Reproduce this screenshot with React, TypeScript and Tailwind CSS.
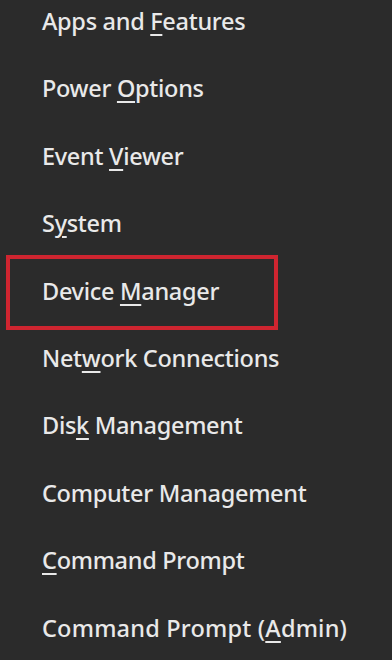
const items: [string, string, string][] = [
  ["Apps and ", "F", "eatures"],
  ["Power ", "O", "ptions"],
  ["Event ", "V", "iewer"],
  ["S", "y", "stem"],
  ["Device ", "M", "anager"],
  ["Net", "w", "ork Connections"],
  ["Dis", "k", " Management"],
  ["Computer Management", "", ""],
  ["", "C", "ommand Prompt"],
  ["Command Prompt (", "A", "dmin)"],
];

export default function App() {
  return (
    <div className="w-[392px] h-[660px] overflow-hidden bg-[#2b2b2b] text-[#e9e9e9] font-['Noto_Sans',sans-serif]">
      <ul className="-mt-[12px]">
        {items.map(([a, k, b], i) => (
          <li key={i} className="relative h-[67.4px] flex items-center pl-[42px] text-[23.5px] font-medium tracking-[-0.3px]">
            {i === 4 && (
              <div className="absolute left-[6px] top-[-3px] w-[272px] h-[75px] border-[4px] border-[#cf2530]" />
            )}
            <span className={i === 9 ? "tracking-[0.2px]" : ""}>
              {a}
              {k && <span className="underline underline-offset-[4px] decoration-[1.5px]">{k}</span>}
              {b}
            </span>
          </li>
        ))}
      </ul>
    </div>
  );
}
